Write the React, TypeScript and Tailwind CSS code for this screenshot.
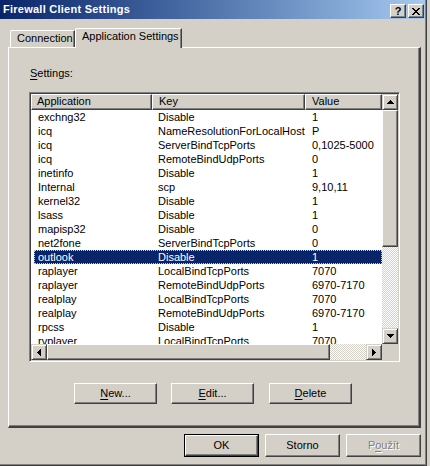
import React from "react";

const rows: [string, string, string][] = [
  ["exchng32", "Disable", "1"],
  ["icq", "NameResolutionForLocalHost", "P"],
  ["icq", "ServerBindTcpPorts", "0,1025-5000"],
  ["icq", "RemoteBindUdpPorts", "0"],
  ["inetinfo", "Disable", "1"],
  ["Internal", "scp", "9,10,11"],
  ["kernel32", "Disable", "1"],
  ["lsass", "Disable", "1"],
  ["mapisp32", "Disable", "0"],
  ["net2fone", "ServerBindTcpPorts", "0"],
  ["outlook", "Disable", "1"],
  ["raplayer", "LocalBindTcpPorts", "7070"],
  ["raplayer", "RemoteBindUdpPorts", "6970-7170"],
  ["realplay", "LocalBindTcpPorts", "7070"],
  ["realplay", "RemoteBindUdpPorts", "6970-7170"],
  ["rpcss", "Disable", "1"],
  ["rvplayer", "LocalBindTcpPorts", "7070"],
];

const raised =
  "bg-[#D4D0C8] border border-t-white border-l-white border-r-[#404040] border-b-[#404040] shadow-[inset_-1px_-1px_#808080]";
const sbBtn =
  "bg-[#D4D0C8] border border-t-[#D4D0C8] border-l-[#D4D0C8] border-r-[#404040] border-b-[#404040] shadow-[inset_1px_1px_#ffffff,inset_-1px_-1px_#808080] flex items-center justify-center";
const checker =
  "bg-[image:repeating-conic-gradient(#ffffff_0%_25%,#d4d0c8_0%_50%)] bg-[length:2px_2px]";

function Arrow({ dir }: { dir: "up" | "down" | "left" | "right" }) {
  const r = [0, 1, 2, 3];
  if (dir === "up" || dir === "down") {
    return (
      <svg width="7" height="4" shapeRendering="crispEdges">
        {r.map((i) => {
          const y = dir === "up" ? i : 3 - i;
          return <rect key={i} x={3 - i} y={y} width={1 + 2 * i} height={1} fill="#000" />;
        })}
      </svg>
    );
  }
  return (
    <svg width="4" height="7" shapeRendering="crispEdges">
      {r.map((i) => {
        const x = dir === "left" ? i : 3 - i;
        return <rect key={i} x={x} y={3 - i} width={1} height={1 + 2 * i} fill="#000" />;
      })}
    </svg>
  );
}

function CloseGlyph() {
  const r = [0, 1, 2, 3, 4, 5, 6];
  return (
    <svg width="8" height="7" shapeRendering="crispEdges">
      {r.map((i) => (
        <g key={i}>
          <rect x={i} y={i} width={2} height={1} fill="#000" />
          <rect x={6 - i} y={i} width={2} height={1} fill="#000" />
        </g>
      ))}
    </svg>
  );
}

export default function App() {
  return (
    <div className="w-[430px] h-[466px] bg-[#D4D0C8] font-['Liberation_Sans',Arial,sans-serif] text-[11px] text-black overflow-hidden">
      <div className="w-[427px] h-[466px] flex flex-col border-r border-b border-r-[#404040] border-b-[#404040] shadow-[inset_-1px_-1px_#808080]">
        {/* Title bar */}
        <div className="h-[19px] mr-[1px] flex items-start bg-linear-to-r from-[#0A246A] to-[#A6CAF0]">
          <div className="pl-[3px] h-[19px] leading-[19px] font-bold text-white flex-1 tracking-[0.25px]">
            Firewall Client Settings
          </div>
          <div className={`${raised} mt-[4px] w-[16px] h-[14px] flex items-center justify-center font-bold text-[11px] leading-none`}>
            ?
          </div>
          <div className={`${raised} mt-[4px] ml-[2px] mr-[1px] w-[16px] h-[14px] flex items-center justify-center`}>
            <CloseGlyph />
          </div>
        </div>

        {/* Tabs */}
        <div className="h-[28px] flex items-end pl-[10px]">
          <div className="w-[65px] h-[17px] border-t border-l border-white rounded-tl-[2px] border-r border-r-[#404040] shadow-[inset_-1px_0_#808080] pl-[6px] leading-[15px]">
            Connection
          </div>
          <div className="relative z-10 w-[107px] h-[20px] mb-[-1px] bg-[#D4D0C8] border-t border-l border-white rounded-tl-[2px] border-r border-r-[#404040] shadow-[inset_-1px_0_#808080] pl-[6px] leading-[15px]">
            Application Settings
          </div>
        </div>

        {/* Panel */}
        <div className="ml-[8px] w-[413px] h-[381px] border-t border-l border-white border-r-2 border-b-2 border-r-[#404040] border-b-[#404040] shadow-[inset_-1px_-1px_#808080] pl-[20px] pt-[19px] flex flex-col">
          <div className="h-[13px] leading-[13px] pl-[1px]">
            <span className="underline underline-offset-2">S</span>ettings:
          </div>
          <div className="mt-[12px] w-[371px] h-[270px] border border-t-[#808080] border-l-[#808080] border-r-white border-b-white shadow-[inset_1px_1px_#404040,inset_-1px_-1px_#D4D0C8] p-[1px] flex">
            {/* left: header + rows + hscroll */}
            <div className="w-[351px] flex flex-col">
              <div className="h-[16px] flex">
                <div className={`${raised} w-[121px] h-[16px] pl-[5px] leading-[13px]`}>Application</div>
                <div className={`${raised} w-[153px] h-[16px] pl-[6px] leading-[13px]`}>Key</div>
                <div className={`${raised} w-[77px] h-[16px] pl-[6px] leading-[13px]`}>Value</div>
              </div>
              <div className="h-[234px] bg-white overflow-hidden">
                {rows.map((r, i) => {
                  const sel = i === 10;
                  return (
                    <div
                      key={i}
                      className={`h-[14px] leading-[14px] ml-[3px] flex ${
                        sel
                          ? "bg-[#0A246A] text-white outline-1 outline-dotted outline-[#d8d090] -outline-offset-1"
                          : ""
                      }`}
                    >
                      <div className="w-[118px] pl-[4px] whitespace-nowrap">{r[0]}</div>
                      <div className="w-[153px] pl-[6px] whitespace-nowrap">{r[1]}</div>
                      <div className="flex-1 pl-[7px] whitespace-nowrap">{r[2]}</div>
                    </div>
                  );
                })}
              </div>
              <div className="h-[16px] flex">
                <div className={`${sbBtn} w-[16px] h-[16px]`}>
                  <Arrow dir="left" />
                </div>
                <div className={`${raised} w-[283px] h-[16px]`} />
                <div className={`${checker} w-[36px] h-[16px]`} />
                <div className={`${sbBtn} w-[16px] h-[16px]`}>
                  <Arrow dir="right" />
                </div>
              </div>
            </div>
            {/* right: vscroll + corner */}
            <div className="w-[16px] flex flex-col">
              <div className={`${sbBtn} w-[16px] h-[16px]`}>
                <Arrow dir="up" />
              </div>
              <div className={`${raised} w-[16px] h-[137px]`} />
              <div className={`${checker} w-[16px] h-[81px]`} />
              <div className={`${sbBtn} w-[16px] h-[16px]`}>
                <Arrow dir="down" />
              </div>
              <div className="w-[16px] h-[16px] bg-[#D4D0C8]" />
            </div>
          </div>
          <div className="mt-[21px] ml-[45px] flex gap-[14px]">
            <div className={`${raised} w-[83px] h-[21px] flex items-center justify-center`}>
              <span>
                <span className="underline underline-offset-2">N</span>ew...
              </span>
            </div>
            <div className={`${raised} w-[83px] h-[21px] flex items-center justify-center`}>
              <span>
                <span className="underline underline-offset-2">E</span>dit...
              </span>
            </div>
            <div className={`${raised} ml-[1px] w-[83px] h-[21px] flex items-center justify-center`}>
              <span>
                <span className="underline underline-offset-2">D</span>elete
              </span>
            </div>
          </div>
        </div>

        {/* Bottom buttons */}
        <div className="mt-[6px] ml-[184px] flex gap-[6px]">
          <div className="w-[75px] h-[23px] border border-black">
            <div className={`${raised} w-full h-full flex items-center justify-center`}>OK</div>
          </div>
          <div className={`${raised} w-[75px] h-[23px] flex items-center justify-center`}>Storno</div>
          <div className={`${raised} w-[75px] h-[23px] flex items-center justify-center text-[#808080] [text-shadow:1px_1px_0_#ffffff]`}>
            <span>
              P<span className="underline underline-offset-2">o</span>užít
            </span>
          </div>
        </div>
      </div>
    </div>
  );
}
